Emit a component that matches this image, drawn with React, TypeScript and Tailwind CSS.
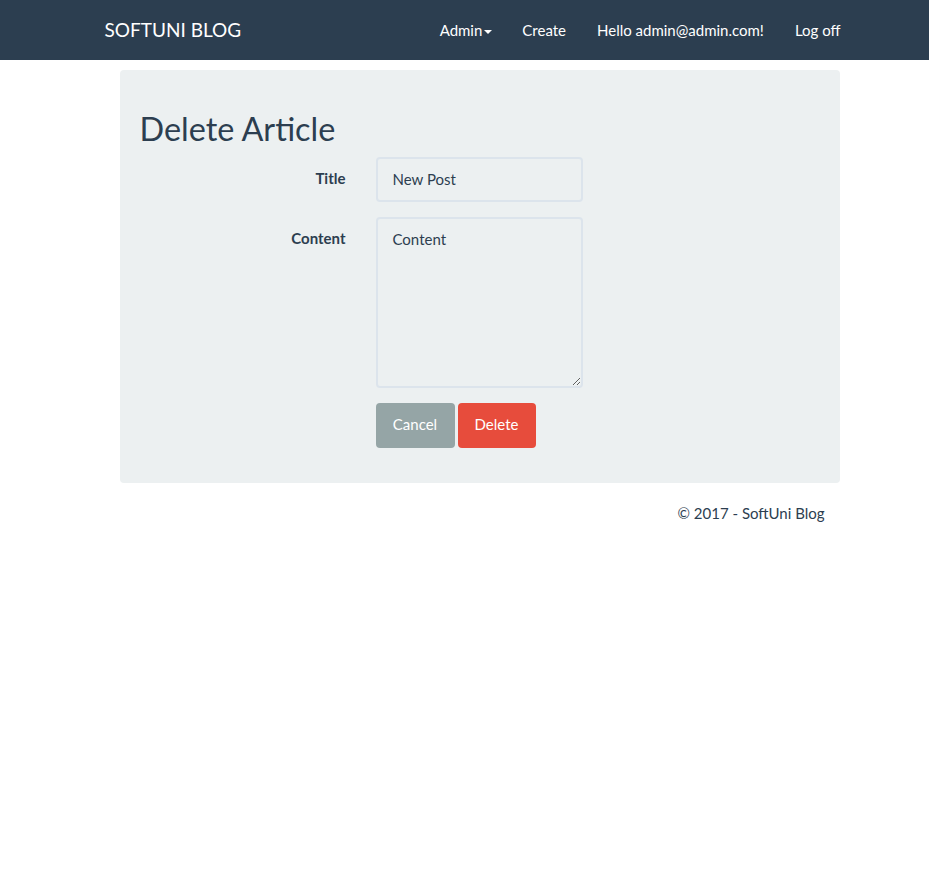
export default function App() {
  return (
    <div className="min-h-screen bg-white text-[15px] leading-[1.428] text-[#2c3e50]" style={{ fontFamily: "Lato, 'Open Sans', sans-serif" }}>
      <nav className="h-[60px] bg-[#2c3e50]">
        <div className="mx-auto flex h-full w-[750px] items-center justify-between">
          <a className="pl-[15px] text-[19px] text-white">SOFTUNI BLOG</a>
          <ul className="-mr-[16px] flex items-center pt-[1px]">
            <li className="flex items-center px-[15px] text-white">
              Admin
              <span className="ml-[2px] mt-[2px] inline-block h-0 w-0 border-x-[4.5px] border-t-[4px] border-x-transparent border-t-white" />
            </li>
            <li className="px-[15px] text-white">Create</li>
            <li className="px-[16px] text-white">Hello admin@admin.com!</li>
            <li className="px-[15px] text-white">Log off</li>
          </ul>
        </div>
      </nav>

      <div className="mx-auto w-[750px]">
        <div className="ml-[30px] mt-[10px] w-[720px] rounded-[4px] bg-[#ecf0f1] px-[19px] pb-[20px] pt-[19px]">
          <h2 className="mb-[10px] ml-[1px] mt-[22px] text-[32.4px] font-normal leading-[1.1]">Delete Article</h2>
          <form className="-mx-[15px]">
            <div className="mb-[15px] flex">
              <label className="w-[237px] px-[15px] pt-[11px] text-right font-bold">Title</label>
              <div className="w-[237px] px-[15px]">
                <input
                  readOnly
                  value="New Post"
                  className="h-[45px] w-full rounded-[4px] border-2 border-[#dce4ec] bg-transparent px-[15px] text-[15px] text-[#2c3e50] outline-none"
                />
              </div>
            </div>
            <div className="mb-[15px] flex">
              <label className="w-[237px] px-[15px] pt-[11px] text-right font-bold">Content</label>
              <div className="w-[237px] px-[15px]">
                <textarea
                  readOnly
                  value="Content"
                  className="block h-[171px] w-full rounded-[4px] border-2 border-[#dce4ec] bg-transparent px-[15px] py-[10px] text-[15px] text-[#2c3e50] outline-none"
                />
              </div>
            </div>
            <div className="mb-[15px] flex">
              <div className="ml-[237px] flex gap-[3px] px-[15px]">
                <button type="button" className="h-[45px] w-[79px] rounded-[4px] bg-[#95a5a6] text-white">Cancel</button>
                <button type="button" className="h-[45px] w-[78px] rounded-[4px] bg-[#e74c3c] text-white">Delete</button>
              </div>
            </div>
          </form>
        </div>

        <footer className="mt-[20px] px-[15px] text-right">
          <p>© 2017 - SoftUni Blog</p>
        </footer>
      </div>
    </div>
  );
}
